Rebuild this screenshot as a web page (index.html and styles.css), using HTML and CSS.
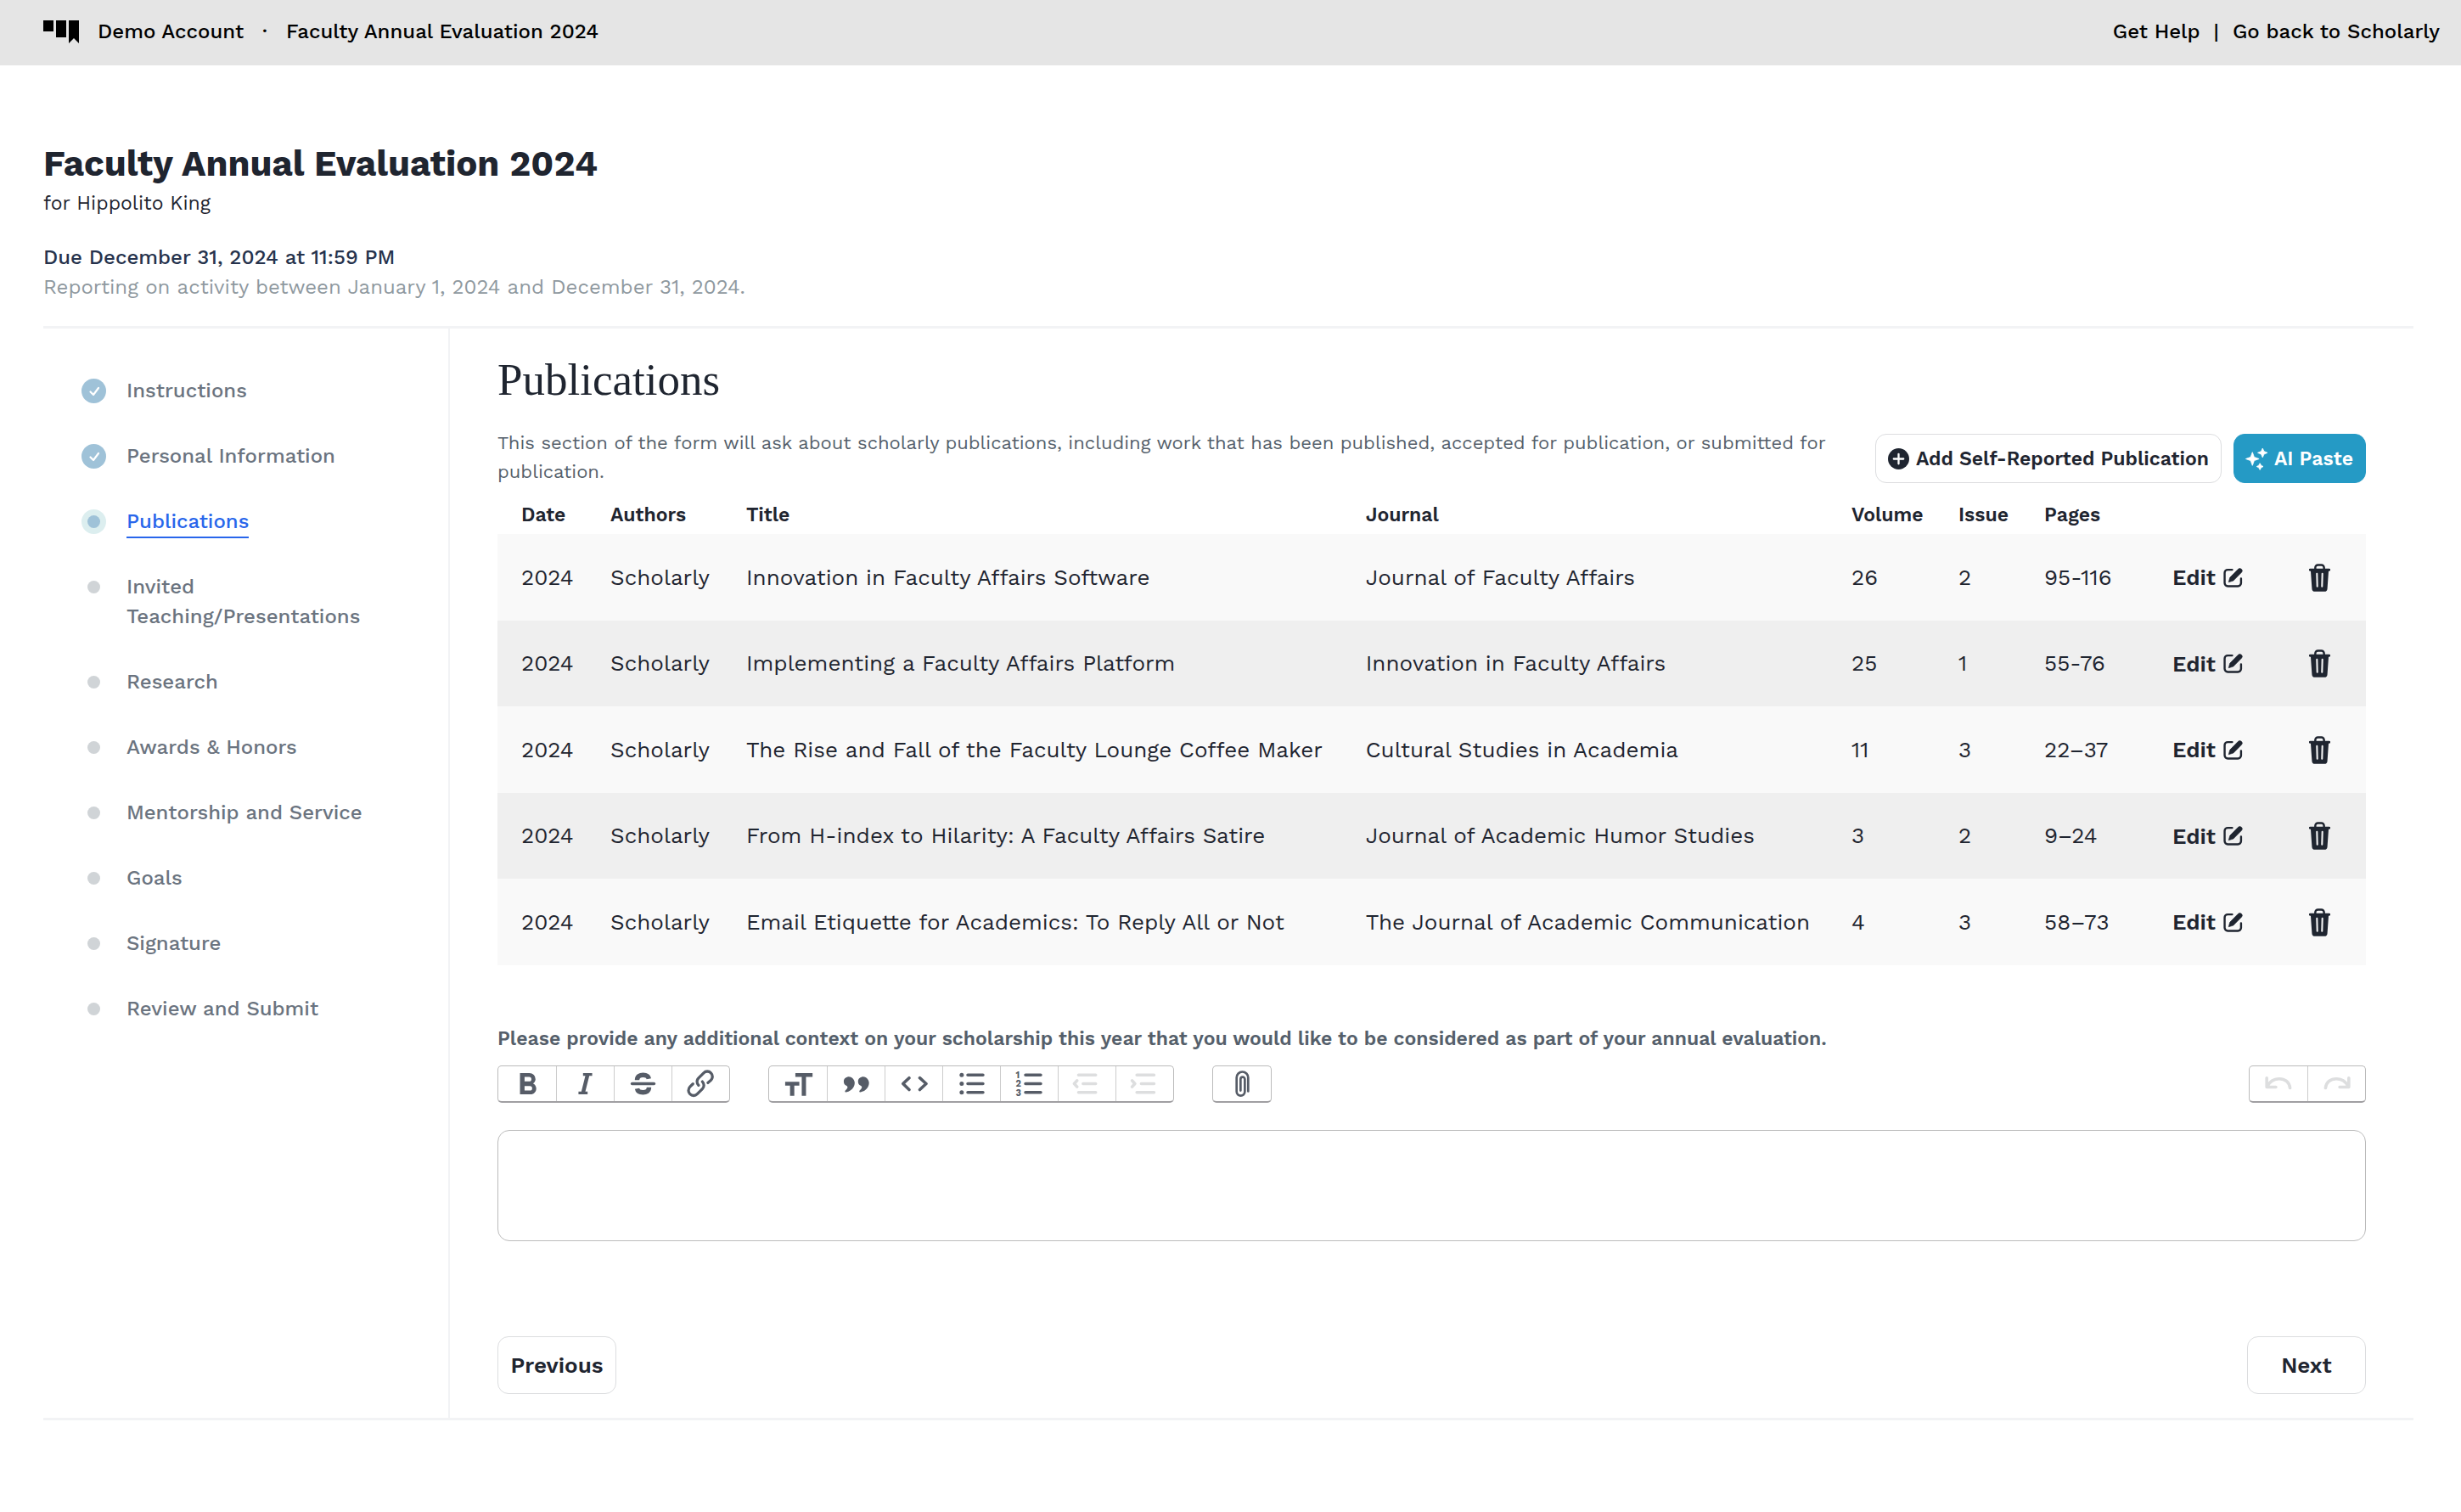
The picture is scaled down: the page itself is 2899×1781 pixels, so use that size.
FILE: index.html
```html
<!DOCTYPE html>
<html lang="en">

<head>
    <meta charset="UTF-8">
    <meta name="viewport" content="width=device-width, initial-scale=1.0">
    <title>Faculty Annual Evaluation 2024</title>
    <link rel="stylesheet" href="styles.css">
</head>

<body>
    <!-- icons used more than once -->
    <svg class="sprite" aria-hidden="true">
        <symbol id="icon-check" viewBox="0 0 28 28">
            <path d="M9.500 14.500l3.500 3.500 6-8" fill="none" stroke="#fff" stroke-width="2.200" stroke-linecap="round" stroke-linejoin="round" />
        </symbol>
        <symbol id="icon-edit" viewBox="0 0 22 22">
            <path d="M10 2H5a3.500 3.500 0 0 0-3.500 3.500V17A3.500 3.500 0 0 0 5 20.500h11.500A3.500 3.500 0 0 0 20 17v-5" fill="none" stroke="currentColor" stroke-width="2.300" stroke-linecap="round" />
            <path d="M6 16l1.400-5.200L16.600 1.400a2.600 2.600 0 0 1 3.900 3.700l-9.200 9.300z" fill="currentColor" stroke="currentColor" stroke-width=".6" />
        </symbol>
        <symbol id="icon-trash" viewBox="0 0 24 32">
            <path d="M7 6V4.500A3 3 0 0 1 10 1.500h4a3 3 0 0 1 3 3V6" fill="none" stroke="currentColor" stroke-width="2.400" />
            <path d="M1.200 5.500h21.600a1.200 1.200 0 0 1 0 3h-.6L20.800 28.500a3.500 3.500 0 0 1-3.500 3.300H6.700a3.500 3.500 0 0 1-3.500-3.300L1.800 8.500h-.6a1.200 1.200 0 0 1 0-3z" fill="currentColor" />
            <path d="M8.900 11.500l.4 14.500M15.100 11.500l-.4 14.500" fill="none" stroke="#f5f5f5" stroke-width="2" stroke-linecap="round" />
        </symbol>
    </svg>

    <header class="topbar">
        <div class="topbar-group">
            <svg class="logo" viewBox="0 0 42 27" aria-hidden="true">
                <path d="M0 0h12v13H0zM15 0h12v20H15zM30 0h12v27l-6-6-6 6z" />
            </svg>
            <span>Demo Account</span>
            <span>·</span>
            <span>Faculty Annual Evaluation 2024</span>
        </div>
        <nav class="topbar-links">
            <a href="#">Get Help</a>
            <span>|</span>
            <a href="#">Go back to Scholarly</a>
        </nav>
    </header>

    <main class="page">
        <div class="form-header">
            <h1>Faculty Annual Evaluation 2024</h1>
            <p class="person">for Hippolito King</p>
            <p class="due">Due December 31, 2024 at 11:59 PM</p>
            <p class="period">Reporting on activity between January 1, 2024 and December 31, 2024.</p>
        </div>

        <div class="form-body">
            <nav class="sidebar">
                <ul class="steps">
                    <li class="step"><span class="marker done"><svg><use href="#icon-check" /></svg></span><a href="#">Instructions</a></li>
                    <li class="step"><span class="marker done"><svg><use href="#icon-check" /></svg></span><a href="#">Personal Information</a></li>
                    <li class="step"><span class="marker current"></span><a href="#" class="active">Publications</a></li>
                    <li class="step"><span class="marker"></span><a href="#">Invited Teaching/Presentations</a></li>
                    <li class="step"><span class="marker"></span><a href="#">Research</a></li>
                    <li class="step"><span class="marker"></span><a href="#">Awards &amp; Honors</a></li>
                    <li class="step"><span class="marker"></span><a href="#">Mentorship and Service</a></li>
                    <li class="step"><span class="marker"></span><a href="#">Goals</a></li>
                    <li class="step"><span class="marker"></span><a href="#">Signature</a></li>
                    <li class="step"><span class="marker"></span><a href="#">Review and Submit</a></li>
                </ul>
            </nav>

            <section class="content">
                <h2>Publications</h2>
                <div class="intro">
                    <p>This section of the form will ask about scholarly publications, including work that has been published, accepted for publication, or submitted for publication.</p>
                    <div class="actions">
                        <button class="btn" type="button">
                            <svg viewBox="0 0 24 24" aria-hidden="true">
                                <circle cx="12" cy="12" r="12" fill="currentColor" />
                                <path d="M12 6.500v11M6.500 12h11" stroke="#fff" stroke-width="2.200" stroke-linecap="round" />
                            </svg>
                            Add Self-Reported Publication
                        </button>
                        <button class="btn btn-primary" type="button">
                            <svg viewBox="0 0 24 24" aria-hidden="true">
                                <path d="M7 4.500l2 5.500 5.500 2L9 14l-2 5.500L5 14l-5.500-2L5 10zM18.500 0l1.600 3.500 3.900 1.600-3.900 1.600-1.600 3.700-1.600-3.700L13 5.100l3.900-1.600zM15.500 17l1.300 2.400 2.400 1.300-2.400 1.200-1.300 2.500-1.300-2.500-2.400-1.200 2.400-1.300z" fill="currentColor" stroke="currentColor" stroke-width=".8" stroke-linejoin="round" />
                            </svg>
                            AI Paste
                        </button>
                    </div>
                </div>

                <table class="publications">
                    <colgroup>
                        <col class="col-date">
                        <col class="col-authors">
                        <col>
                        <col class="col-journal">
                        <col class="col-volume">
                        <col class="col-issue">
                        <col class="col-pages">
                        <col class="col-edit">
                        <col class="col-delete">
                    </colgroup>
                    <thead>
                        <tr>
                            <th>Date</th>
                            <th>Authors</th>
                            <th>Title</th>
                            <th>Journal</th>
                            <th>Volume</th>
                            <th>Issue</th>
                            <th>Pages</th>
                            <th></th>
                            <th></th>
                        </tr>
                    </thead>
                    <tbody>
                        <tr>
                            <td>2024</td>
                            <td>Scholarly</td>
                            <td>Innovation in Faculty Affairs Software</td>
                            <td>Journal of Faculty Affairs</td>
                            <td>26</td>
                            <td>2</td>
                            <td>95-116</td>
                            <td><button class="edit" type="button">Edit <svg><use href="#icon-edit" /></svg></button></td>
                            <td><button class="delete" type="button" aria-label="Delete"><svg><use href="#icon-trash" /></svg></button></td>
                        </tr>
                        <tr>
                            <td>2024</td>
                            <td>Scholarly</td>
                            <td>Implementing a Faculty Affairs Platform</td>
                            <td>Innovation in Faculty Affairs</td>
                            <td>25</td>
                            <td>1</td>
                            <td>55-76</td>
                            <td><button class="edit" type="button">Edit <svg><use href="#icon-edit" /></svg></button></td>
                            <td><button class="delete" type="button" aria-label="Delete"><svg><use href="#icon-trash" /></svg></button></td>
                        </tr>
                        <tr>
                            <td>2024</td>
                            <td>Scholarly</td>
                            <td>The Rise and Fall of the Faculty Lounge Coffee Maker</td>
                            <td>Cultural Studies in Academia</td>
                            <td>11</td>
                            <td>3</td>
                            <td>22–37</td>
                            <td><button class="edit" type="button">Edit <svg><use href="#icon-edit" /></svg></button></td>
                            <td><button class="delete" type="button" aria-label="Delete"><svg><use href="#icon-trash" /></svg></button></td>
                        </tr>
                        <tr>
                            <td>2024</td>
                            <td>Scholarly</td>
                            <td>From H-index to Hilarity: A Faculty Affairs Satire</td>
                            <td>Journal of Academic Humor Studies</td>
                            <td>3</td>
                            <td>2</td>
                            <td>9–24</td>
                            <td><button class="edit" type="button">Edit <svg><use href="#icon-edit" /></svg></button></td>
                            <td><button class="delete" type="button" aria-label="Delete"><svg><use href="#icon-trash" /></svg></button></td>
                        </tr>
                        <tr>
                            <td>2024</td>
                            <td>Scholarly</td>
                            <td>Email Etiquette for Academics: To Reply All or Not</td>
                            <td>The Journal of Academic Communication</td>
                            <td>4</td>
                            <td>3</td>
                            <td>58–73</td>
                            <td><button class="edit" type="button">Edit <svg><use href="#icon-edit" /></svg></button></td>
                            <td><button class="delete" type="button" aria-label="Delete"><svg><use href="#icon-trash" /></svg></button></td>
                        </tr>
                    </tbody>
                </table>

                <label class="context-label" for="context">Please provide any additional context on your scholarship this year that you would like to be considered as part of your annual evaluation.</label>
                <div class="toolbar">
                    <div class="tool-group">
                        <button type="button" aria-label="Bold"><svg viewBox="0 0 24 24"><path d="M15.600 11.800c1-.7 1.600-1.800 1.600-2.800a4 4 0 0 0-4-4H7v14h7c2.100 0 3.700-1.700 3.700-3.800 0-1.500-.8-2.800-2.100-3.400zM10 7.500h3a1.500 1.500 0 1 1 0 3h-3v-3zm3.500 9H10v-3h3.500a1.500 1.500 0 1 1 0 3z" /></svg></button>
                        <button type="button" aria-label="Italic"><svg viewBox="0 0 24 24"><path d="M10.500 5h6v1.900h-1.900L12 17.100h1.500V19h-6v-1.900h1.900L12 6.900h-1.500z" /></svg></button>
                        <button type="button" aria-label="Strikethrough"><svg viewBox="0 0 24 24"><path class="line" d="M4.800 12h14.400" /><path class="line bold" d="M15.800 8.800C15.500 7 14 6.300 12 6.300s-3.900.8-3.900 3.300M8.100 15.200c.3 1.800 1.900 2.500 3.900 2.500s3.900-.8 3.900-3.300" /></svg></button>
                        <button type="button" aria-label="Link"><svg viewBox="0 0 24 24"><path d="M9.880 13.700a4.300 4.300 0 0 1 0-6.070l3.370-3.370a4.260 4.260 0 0 1 6.070 0 4.300 4.300 0 0 1 0 6.060l-1.960 1.720a.91.91 0 1 1-1.300-1.300l1.970-1.710a2.460 2.460 0 0 0-3.480-3.480l-3.380 3.370a2.460 2.460 0 0 0 0 3.480.91.91 0 1 1-1.290 1.300zM4.250 19.460a4.300 4.300 0 0 1 0-6.070l1.930-1.900a.91.91 0 1 1 1.300 1.300l-1.930 1.900a2.460 2.460 0 0 0 3.480 3.480l3.370-3.380a2.460 2.460 0 0 0 0-3.480.91.91 0 1 1 1.300-1.300 4.300 4.300 0 0 1 0 6.070l-3.380 3.380a4.260 4.260 0 0 1-6.070 0z" /></svg></button>
                    </div>
                    <div class="tool-group">
                        <button type="button" aria-label="Heading"><svg viewBox="0 0 24 24"><path d="M10 5v2.600h4.200V20H17V7.600h4.300V5zM3.300 10.700v2.600h3.200V20h2.800v-6.700h3.300v-2.600z" /></svg></button>
                        <button type="button" aria-label="Quote"><svg viewBox="0 0 24 24"><path d="M4.581 8.471c.44-.5 1.056-.834 1.758-.995C8.074 7.170 9.201 7.822 10 8.752c1.354 1.578 1.330 3.555.394 5.277-.941 1.731-2.788 3.163-4.988 3.560a.622.622 0 0 1-.653-.317c-.113-.205-.121-.49.160-.764.294-.286.567-.566.791-.835.222-.266.413-.54.524-.815.113-.28.156-.597.026-.908-.128-.303-.39-.524-.72-.69a3.020 3.020 0 0 1-1.674-2.700c0-.905.283-1.590.720-2.088zm9.419 0c.44-.5 1.055-.834 1.758-.995 1.734-.306 2.862.346 3.660 1.276 1.355 1.578 1.330 3.555.395 5.277-.941 1.731-2.789 3.163-4.988 3.560a.622.622 0 0 1-.653-.317c-.113-.205-.122-.49.160-.764.294-.286.567-.566.791-.835.222-.266.412-.54.523-.815.114-.28.157-.597.026-.908-.127-.303-.39-.524-.72-.69a3.020 3.020 0 0 1-1.672-2.701c0-.905.283-1.590.720-2.088z" /></svg></button>
                        <button type="button" aria-label="Code"><svg viewBox="0 0 24 24"><path class="line" d="M8.900 8.200L4.900 12l4 3.900M15.900 8.200l4.200 3.800-4.200 3.900" /></svg></button>
                        <button type="button" aria-label="Bullets"><svg viewBox="0 0 24 24"><circle cx="5.500" cy="6.300" r="1.400" /><circle cx="5.500" cy="12" r="1.400" /><circle cx="5.500" cy="17.700" r="1.400" /><path class="line" d="M9.500 6.300h10M9.500 12h10M9.500 17.700h10" /></svg></button>
                        <button type="button" aria-label="Numbers"><svg viewBox="0 0 24 24"><text x="3" y="8.500">1</text><text x="3" y="14.200">2</text><text x="3" y="19.900">3</text><path class="line" d="M9.500 6.300h10M9.500 12h10M9.500 17.700h10" /></svg></button>
                        <button type="button" aria-label="Decrease level" disabled><svg viewBox="0 0 24 24"><path class="line" d="M6.400 6.300h11.300M9.400 12h8.300M6.400 17.700h11.300M5.400 10L3.600 12l1.800 2" /></svg></button>
                        <button type="button" aria-label="Increase level" disabled><svg viewBox="0 0 24 24"><path class="line" d="M6.800 6.300h11.300M9.700 12h8.400M6.800 17.700h11.300M3.700 10l1.800 2-1.800 2" /></svg></button>
                    </div>
                    <div class="tool-group">
                        <button type="button" aria-label="Attach files"><svg viewBox="0 0 24 24"><path class="line thin" d="M15.800 17V8a3.800 3.800 0 0 0-7.600 0v9.200a2.700 2.700 0 0 0 5.400 0V9a1.400 1.400 0 0 0-2.800 0v7.500" /></svg></button>
                    </div>
                    <div class="tool-group history">
                        <button type="button" aria-label="Undo" disabled><svg viewBox="0 0 24 24"><path class="line" d="M4 8.200v6h6M4.300 13.800C6.200 10.300 9 8.800 12.300 8.800c3.900 0 6.600 2.400 7 6" /></svg></button>
                        <button type="button" aria-label="Redo" disabled><svg viewBox="0 0 24 24"><path class="line" d="M20 8.200v6h-6M19.700 13.800C17.800 10.300 15 8.800 11.700 8.800c-3.900 0-6.600 2.400-7 6" /></svg></button>
                    </div>
                </div>
                <textarea class="editor" id="context"></textarea>

                <div class="pager">
                    <button class="btn btn-large" type="button">Previous</button>
                    <button class="btn btn-large" type="button">Next</button>
                </div>
            </section>
        </div>
    </main>
</body>

</html>
```

FILE: styles.css
```css
* {
    box-sizing: border-box;
}

body {
    margin: 0;
    font-family: "Work Sans", Inter, sans-serif;
    font-size: 24px;
    line-height: 35px;
    background-color: #fff;
    color: #1f2530;
}

h1,
h2,
p,
ul {
    margin: 0;
    padding: 0;
}

a {
    color: inherit;
    text-decoration: none;
}

button {
    font-family: inherit;
    color: inherit;
    cursor: pointer;
}

.sprite {
    display: none;
}

/* Top bar */
.topbar {
    display: flex;
    justify-content: space-between;
    padding: 20px 25px 22px 51px;
    background-color: #e5e5e5;
    color: #000;
    font-weight: 500;
}

.topbar-group {
    display: flex;
    align-items: center;
    gap: 22px;
}

.topbar-links {
    display: flex;
    gap: 16px;
}

.logo {
    width: 42px;
    height: 27px;
}

/* Form heading */
.page {
    padding: 90px 56px 80px 51px;
}

.form-header {
    padding-bottom: 28px;
    border-bottom: 3px solid #f2f3f5;
}

h1 {
    font-size: 42px;
    line-height: 52px;
    font-weight: 700;
}

.person {
    margin: 4px 0 29px;
    font-size: 23px;
    line-height: 34px;
}

.due {
    font-weight: 500;
    color: #26334d;
}

.period {
    color: #8f999f;
}

/* Sidebar */
.form-body {
    display: grid;
    grid-template-columns: 479px 1fr;
    border-bottom: 3px solid #f2f3f5;
}

.sidebar {
    padding: 56px 40px 56px 45px;
    border-right: 2px solid #f2f3f5;
}

.steps {
    display: flex;
    flex-direction: column;
    gap: 42px;
    list-style: none;
}

.step {
    display: flex;
    gap: 24px;
    color: #6b7480;
    font-weight: 500;
}

.marker {
    display: flex;
    flex: none;
    align-items: center;
    justify-content: center;
    width: 29px;
    height: 35px;
}

.marker::before {
    content: "";
    width: 15px;
    height: 15px;
    border-radius: 50%;
    background-color: #d0d4d7;
}

.marker.done,
.marker.current {
    height: 29px;
    margin-top: 3px;
    border-radius: 50%;
    background-color: #9fc2d8;
}

.marker.done::before {
    display: none;
}

.marker.done svg {
    width: 28px;
    height: 28px;
}

.marker.current {
    background-color: #dceeef;
}

.marker.current::before {
    background-color: #9fc2d8;
}

.step .active {
    color: #2866eb;
    box-shadow: 0 2px 0 #2866eb;
}

/* Content */
.content {
    padding: 28px 56px 28px;
}

h2 {
    font-family: "Liberation Serif", serif;
    font-size: 53px;
    line-height: 64px;
    font-weight: 400;
}

.intro {
    display: flex;
    justify-content: space-between;
    align-items: flex-start;
    gap: 4px;
    margin-top: 26px;
    font-size: 22px;
    line-height: 34px;
    color: #555f6b;
}

.actions {
    display: flex;
    flex: none;
    gap: 14px;
    margin-top: 6px;
}

.btn {
    display: flex;
    align-items: center;
    justify-content: center;
    gap: 8px;
    height: 58px;
    padding: 0 14px;
    border: 1px solid #dcdddf;
    border-radius: 13px;
    background-color: #fff;
    color: #1f2530;
    font-size: 23px;
    font-weight: 600;
    white-space: nowrap;
}

.btn svg {
    width: 25px;
    height: 25px;
    overflow: visible;
}

.btn-primary {
    border-color: #259ac5;
    background-color: #259ac5;
    color: #fff;
}

.btn-large {
    width: 140px;
    height: 68px;
    font-size: 26px;
}

/* Publications table */
.publications {
    width: 100%;
    table-layout: fixed;
    border-collapse: collapse;
}

.col-date {
    width: 105px;
}

.col-authors {
    width: 160px;
}

.col-journal {
    width: 26%;
}

.col-volume {
    width: 126px;
}

.col-issue {
    width: 101px;
}

.col-pages {
    width: 151px;
}

.col-edit {
    width: 161px;
}

.col-delete {
    width: 95px;
}

.publications th {
    padding: 20px 0 8px 28px;
    font-size: 23px;
    line-height: 28px;
    font-weight: 600;
    text-align: left;
}

.publications td {
    height: 101px;
    padding: 0 0 0 28px;
    font-size: 26px;
    white-space: nowrap;
}

.publications tbody tr {
    background-color: #efefef;
}

.publications tbody tr:nth-child(odd) {
    background-color: #f9f9f9;
}

.publications tbody tr:nth-child(odd) td {
    height: 102px;
}

.edit,
.delete {
    display: flex;
    align-items: center;
    gap: 9px;
    padding: 0;
    border: none;
    background: none;
    font-size: 26px;
    font-weight: 600;
}

.edit svg {
    width: 23px;
    height: 23px;
}

.delete svg {
    width: 25px;
    height: 33px;
}

/* Text editor */
.context-label {
    display: block;
    margin: 70px 0 14px;
    font-size: 23px;
    line-height: 34px;
    font-weight: 600;
    color: #555f6b;
}

.toolbar {
    display: flex;
    gap: 45px;
    margin-bottom: 32px;
}

.tool-group {
    display: flex;
    border: 1px solid #bbb;
    border-bottom: 2px solid #a09fa2;
    border-radius: 5px;
}

.tool-group button {
    display: flex;
    align-items: center;
    justify-content: center;
    width: 68px;
    height: 41px;
    padding: 0;
    border: none;
    background: none;
    color: #565c67;
}

.tool-group button + button {
    border-left: 1px solid #ccc;
}

.tool-group button:disabled {
    color: #dddedf;
}

.tool-group svg {
    width: 43px;
    height: 43px;
    fill: currentColor;
}

.tool-group .line {
    fill: none;
    stroke: currentColor;
    stroke-width: 2;
    stroke-linecap: round;
    stroke-linejoin: round;
}

.tool-group .bold {
    stroke-width: 3;
    stroke-linecap: butt;
}

.tool-group .thin {
    stroke-width: 1.5;
}

.tool-group text {
    font-size: 6px;
    font-weight: 700;
}

.history {
    margin-left: auto;
}

.editor {
    display: block;
    width: 100%;
    height: 131px;
    padding: 16px;
    border: 1px solid #bbb;
    border-radius: 14px;
    font: inherit;
    resize: none;
}

.pager {
    display: flex;
    justify-content: space-between;
    margin-top: 112px;
}
```
